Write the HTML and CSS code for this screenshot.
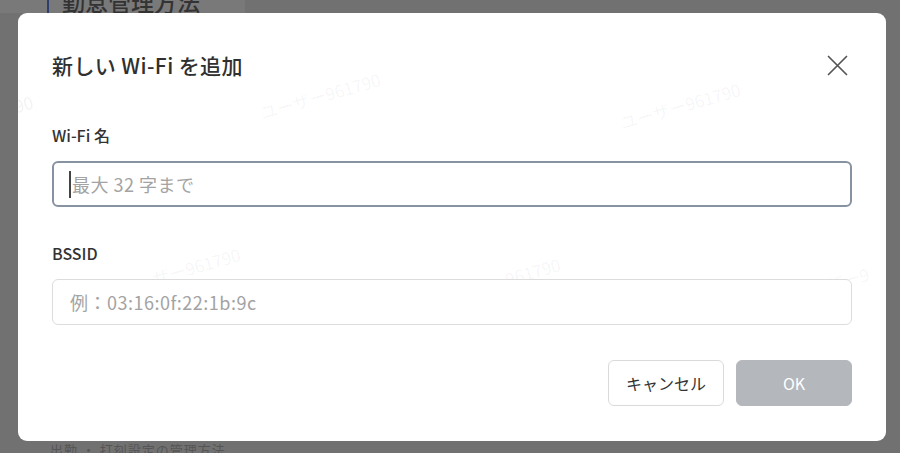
FILE: index.html
```html
<!DOCTYPE html>
<html lang="ja">
<head>
<meta charset="utf-8">
<title>新しい Wi-Fi を追加</title>
<link rel="stylesheet" href="styles.css">
</head>
<body>
<div class="page">
  <div class="page-top">
    <div class="page-card"><span class="page-title">勤怠管理方法</span></div>
  </div>
  <div class="page-bottom"><span class="page-row">出勤 ・ 打刻設定の管理方法</span></div>
</div>

<div class="modal">
  <span class="wm wm1">ユーザー961790</span>
  <span class="wm wm2">ユーザー961790</span>
  <span class="wm wm3">90</span>
  <span class="wm wm4">ユーザー961790</span>
  <span class="wm wm5">ユーザー961790</span>
  <span class="wm wm6">ユーザー9</span>

  <div class="modal-header">
    <h2 class="modal-title">新しい Wi-Fi を追加</h2>
    <svg class="close" viewBox="0 0 21 21" width="21" height="21" aria-label="閉じる">
      <path d="M1.5 1.5 L19.5 19.5 M19.5 1.5 L1.5 19.5" stroke="#555" stroke-width="1.7" stroke-linecap="round" fill="none"/>
    </svg>
  </div>

  <label class="label label-first">Wi-Fi 名</label>
  <div class="field-wrap">
    <input class="field field-focus" type="text" placeholder="最大 32 字まで">
    <span class="caret"></span>
  </div>

  <label class="label label-second">BSSID</label>
  <div class="field-wrap">
    <input class="field" type="text" placeholder="例：03:16:0f:22:1b:9c">
  </div>

  <div class="actions">
    <button class="btn btn-cancel">キャンセル</button>
    <button class="btn btn-ok">OK</button>
  </div>
</div>
</body>
</html>
```

FILE: styles.css
```css
html, body {
  margin: 0;
  padding: 0;
  width: 900px;
  height: 453px;
  overflow: hidden;
  background: #717171;
  font-family: "Noto Sans CJK JP", "Noto Sans", sans-serif;
}

.page {
  display: flex;
  flex-direction: column;
  justify-content: space-between;
  height: 453px;
}

.page-top {
  height: 13px;
  overflow: hidden;
}

.page-card {
  width: 245px;
  height: 13px;
  background: #797979;
  padding-left: 47px;
  box-sizing: border-box;
  display: flex;
}

.page-title {
  border-left: 2px solid #2d3f6e;
  padding-left: 13px;
  font-size: 23px;
  line-height: 22px;
  margin-top: -10px;
  color: #333;
  font-weight: 500;
}

.page-bottom {
  height: 12px;
  overflow: hidden;
  padding-left: 50px;
}

.page-row {
  display: block;
  font-size: 13px;
  line-height: 13px;
  margin-top: 2px;
  color: #555;
  letter-spacing: 1px;
}

.modal {
  position: fixed;
  left: 18px;
  top: 13px;
  width: 868px;
  height: 428px;
  box-sizing: border-box;
  padding: 37px 34px 0 34px;
  background: #fff;
  border-radius: 9px;
  display: flex;
  flex-direction: column;
  overflow: hidden;
}

.wm {
  position: absolute;
  font-size: 17px;
  color: rgba(0, 0, 0, 0.05);
  transform: rotate(-16deg);
  white-space: nowrap;
  pointer-events: none;
}
.wm1 { left: 240px; top: 70px; }
.wm2 { left: 600px; top: 80px; }
.wm3 { left: -4px; top: 78px; }
.wm4 { left: 100px; top: 245px; }
.wm5 { left: 420px; top: 255px; }
.wm6 { left: 775px; top: 258px; }

.modal-header {
  display: flex;
  justify-content: space-between;
  align-items: center;
  height: 30px;
}

.modal-title {
  margin: 0;
  font-size: 21px;
  line-height: 30px;
  letter-spacing: 0.4px;
  font-weight: 500;
  color: #303030;
}

.close {
  margin-right: 4px;
  display: block;
}

.label {
  font-size: 16px;
  line-height: 24px;
  font-weight: 500;
  color: #333;
}

.label-first { margin-top: 43px; }
.label-second { margin-top: 34px; }

.field-wrap {
  position: relative;
  margin-top: 14px;
}

.field {
  display: block;
  width: 100%;
  height: 46px;
  box-sizing: border-box;
  border: 1px solid #dcdcdc;
  border-radius: 6px;
  padding: 0 17px;
  font-family: "Noto Sans CJK JP", "Noto Sans", sans-serif;
  font-size: 18px;
  letter-spacing: 0.5px;
  color: #333;
  background: #fff;
  outline: none;
}

.field::placeholder {
  color: #a3a3a3;
}

.field-focus {
  border: 2px solid #8793a1;
  padding-left: 18px;
}

.caret {
  position: absolute;
  left: 17px;
  top: 10px;
  width: 2px;
  height: 27px;
  background: #444;
}

.actions {
  display: flex;
  justify-content: flex-end;
  gap: 12px;
  margin-top: 35px;
}

.btn {
  width: 116px;
  height: 46px;
  border-radius: 6px;
  font-family: "Noto Sans CJK JP", "Noto Sans", sans-serif;
  font-size: 16px;
  cursor: pointer;
  padding: 0;
}

.btn-cancel {
  background: #fff;
  border: 1px solid #dadada;
  color: #333;
}

.btn-ok {
  background: #b4b7bc;
  border: 1px solid #b4b7bc;
  color: #fff;
}
```
